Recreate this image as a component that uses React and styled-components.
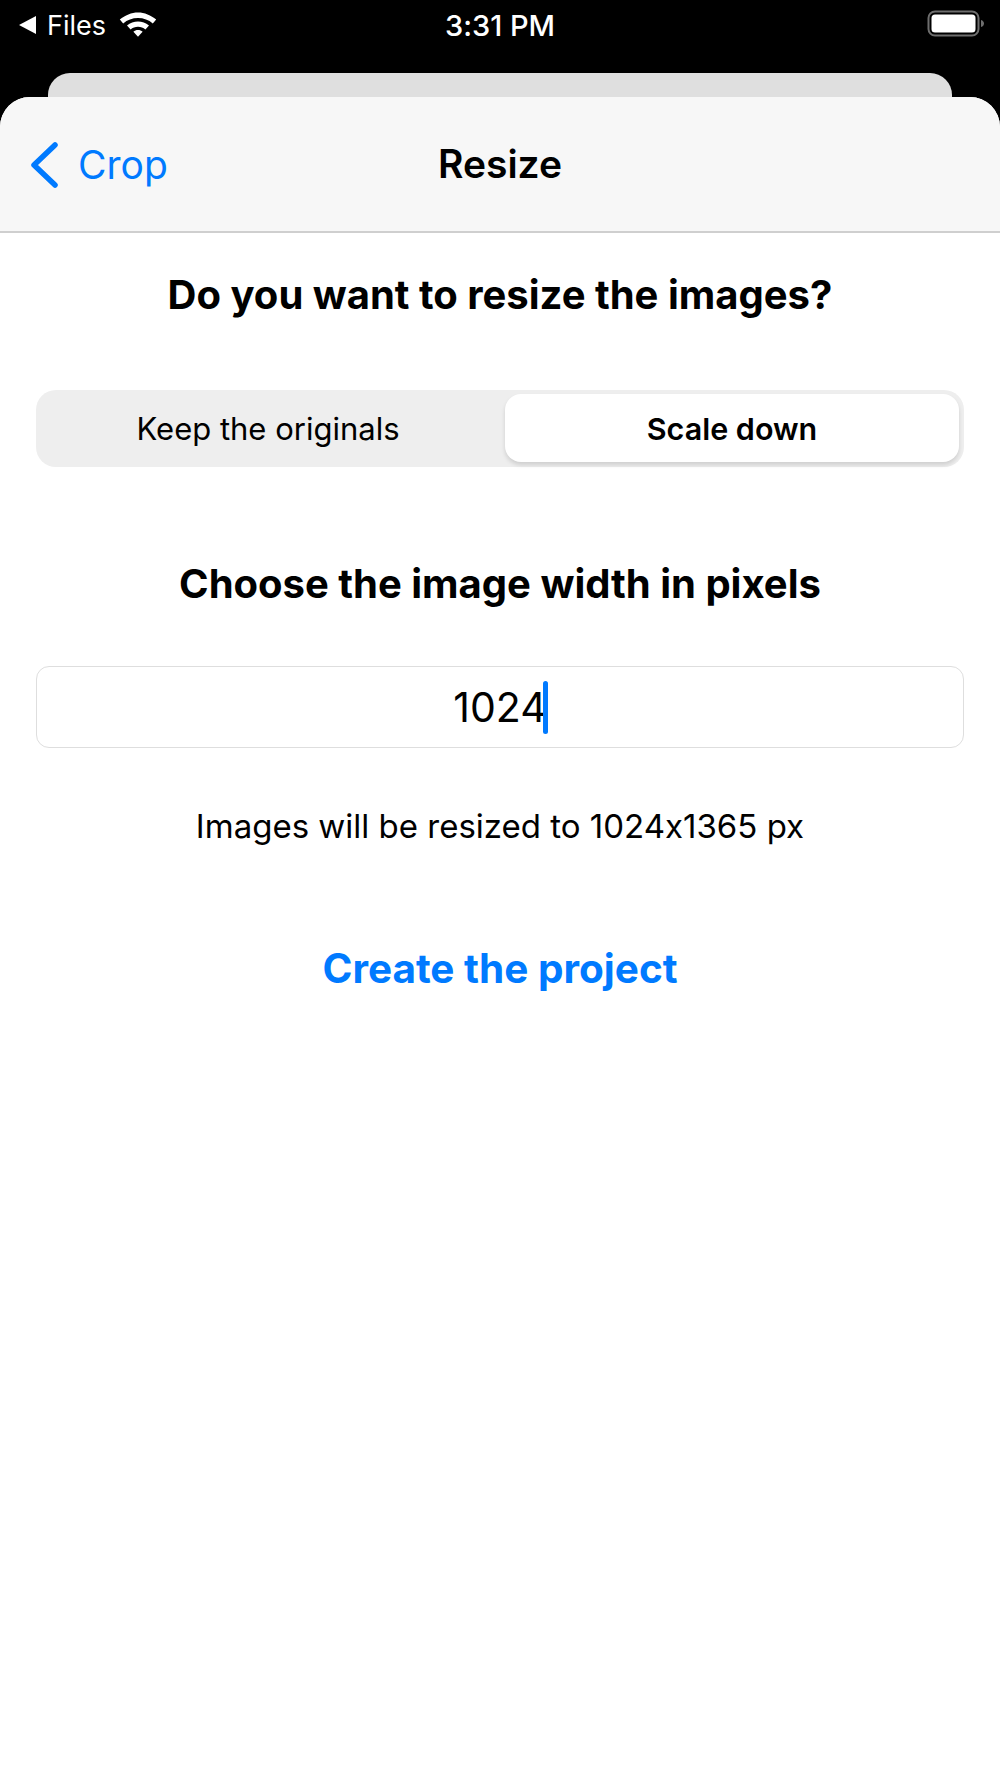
import styled, { createGlobalStyle } from "styled-components";

const Global = createGlobalStyle`
    html, body {
        margin:0;
        padding:0;
        background:#000;
    }
    * {
        box-sizing:border-box;
    }
`
const Screen = styled.div`
    width:1000px;
    height:1778px;
    display:flex;
    flex-direction:column;
    background:#000;
    font-family:Inter, "Liberation Sans", sans-serif;
    font-feature-settings:"calt" 0;
    color:#000;
    overflow:hidden;
`
const StatusBar = styled.div`
    height:73px;
    flex:none;
    display:grid;
    grid-template-columns:1fr auto 1fr;
    padding:0 13px;
    color:#fff;
`
const StatusLeft = styled.div`
    display:flex;
    align-items:flex-start;
    padding:12px 0 0 5px;
    gap:10px;
    font-size:27px;
    line-height:28px;
`
const WifiSlot = styled.span`
    margin:-1px 0 0 3px;
`
const Clock = styled.div`
    padding-top:12px;
    font-weight:500;
    font-size:29px;
    line-height:28px;
`
const StatusRight = styled.div`
    display:flex;
    justify-content:flex-end;
    padding-top:10px;
`
const Peek = styled.div`
    height:24px;
    flex:none;
    margin:0 48px;
    background:#dfdfdf;
    border-radius:22px 22px 0 0;
`
const Sheet = styled.div`
    flex:1;
    background:#fff;
    border-radius:30px 30px 0 0;
    overflow:hidden;
`
const NavBar = styled.div`
    height:136px;
    position:relative;
    display:flex;
    align-items:center;
    justify-content:center;
    background:#f7f7f7;
    border-bottom:2px solid #cfcfcf;
`
const BackButton = styled.div`
    position:absolute;
    left:29px;
    top:44px;
    display:flex;
    align-items:center;
    gap:19px;
    color:#007aff;
    font-size:39px;
    line-height:47px;
`
const Title = styled.div`
    font-size:39px;
    font-weight:600;
    margin-top:-1px;
`
const Content = styled.div`
    display:flex;
    flex-direction:column;
    align-items:center;
    padding:38px 36px 0;
`
const Heading = styled.h2`
    margin:${(p) => p.$top || 0}px 0 0;
    font-size:40px;
    line-height:48px;
    font-weight:700;
    text-align:center;
`
const Segmented = styled.div`
    width:100%;
    height:77px;
    margin-top:71px;
    padding:4px 5px 5px;
    display:grid;
    grid-template-columns:1fr 1fr;
    column-gap:10px;
    background:#eeeeee;
    border-radius:20px;
`
const Segment = styled.div`
    display:flex;
    align-items:center;
    justify-content:center;
    font-size:${(p) => (p.$active ? 30.5 : 31)}px;
    font-weight:${(p) => (p.$active ? 600 : 400)};
    border-radius:16px;
    background:${(p) => (p.$active ? "#fff" : "transparent")};
    box-shadow:${(p) => (p.$active ? "0 3px 4px rgba(0,0,0,0.13)" : "none")};
`
const Field = styled.div`
    width:100%;
    height:82px;
    margin-top:58px;
    display:flex;
    align-items:center;
    justify-content:center;
    border:1.5px solid #dedede;
    border-radius:13px;
    font-size:41px;
`
const Caret = styled.span`
    width:5px;
    height:53px;
    margin:0 -1px 0 -4px;
    border-radius:3px;
    background:#007aff;
`
const Hint = styled.p`
    margin:56px 0 0;
    font-size:33px;
    line-height:44px;
`
const CreateButton = styled.div`
    margin-top:96px;
    color:#007aff;
    font-size:40.5px;
    line-height:50px;
    font-weight:700;
`

function WifiIcon() {
    return (
        <svg width="38" height="26" viewBox="0 0 38 26" fill="#fff">
            <path d="M19 1.5C12.5 1.5 6 4.2 .8 8.6L4.2 12.4C8.2 9 13.4 7 19 7S29.8 9 33.8 12.4L37.2 8.6C32 4.2 25.5 1.5 19 1.5Z" />
            <path d="M19 10.4C15 10.4 11.2 11.8 8 14.5L11.6 18.4C13.6 16.7 16.2 15.8 19 15.8S24.4 16.7 26.4 18.4L30 14.5C26.8 11.8 23 10.4 19 10.4Z" />
            <path d="M19 19C17.2 19 15.6 19.6 14.4 20.7L19 25.7L23.6 20.7C22.4 19.6 20.8 19 19 19Z" />
        </svg>
    );
}

function BatteryIcon() {
    return (
        <svg width="60" height="28" viewBox="0 0 60 28" fill="none">
            <rect x="1.5" y="1.5" width="50" height="24" rx="6.5" stroke="#6e6e6e" strokeWidth="2" />
            <rect x="4.5" y="4.5" width="44" height="18" rx="3.5" fill="#fff" />
            <path d="M54 10C56 10.5 57 12 57 13.5S56 16.5 54 17Z" fill="#6e6e6e" />
        </svg>
    );
}

function BackArrow() {
    return (
        <svg width="30" height="46" viewBox="0 0 30 46" fill="none">
            <path d="M26 3L5 23L26 43" stroke="#007aff" strokeWidth="5.5" strokeLinecap="round" strokeLinejoin="round" />
        </svg>
    );
}

function LeftTriangle() {
    return (
        <svg width="19" height="26" viewBox="0 0 19 26" fill="#fff">
            <path d="M18 4V22L1 13Z" />
        </svg>
    );
}

export default function App() {
    return (
        <Screen>
            <Global />
            <StatusBar>
                <StatusLeft>
                    <LeftTriangle />
                    <span>Files</span>
                    <WifiSlot>
                        <WifiIcon />
                    </WifiSlot>
                </StatusLeft>
                <Clock>3:31 PM</Clock>
                <StatusRight>
                    <BatteryIcon />
                </StatusRight>
            </StatusBar>
            <Peek />
            <Sheet>
                <NavBar>
                    <BackButton>
                        <BackArrow />
                        <span>Crop</span>
                    </BackButton>
                    <Title>Resize</Title>
                </NavBar>
                <Content>
                    <Heading>Do you want to resize the images?</Heading>
                    <Segmented>
                        <Segment>Keep the originals</Segment>
                        <Segment $active>Scale down</Segment>
                    </Segmented>
                    <Heading $top={93}>Choose the image width in pixels</Heading>
                    <Field>
                        1024
                        <Caret />
                    </Field>
                    <Hint>Images will be resized to 1024x1365 px</Hint>
                    <CreateButton>Create the project</CreateButton>
                </Content>
            </Sheet>
        </Screen>
    );
}
